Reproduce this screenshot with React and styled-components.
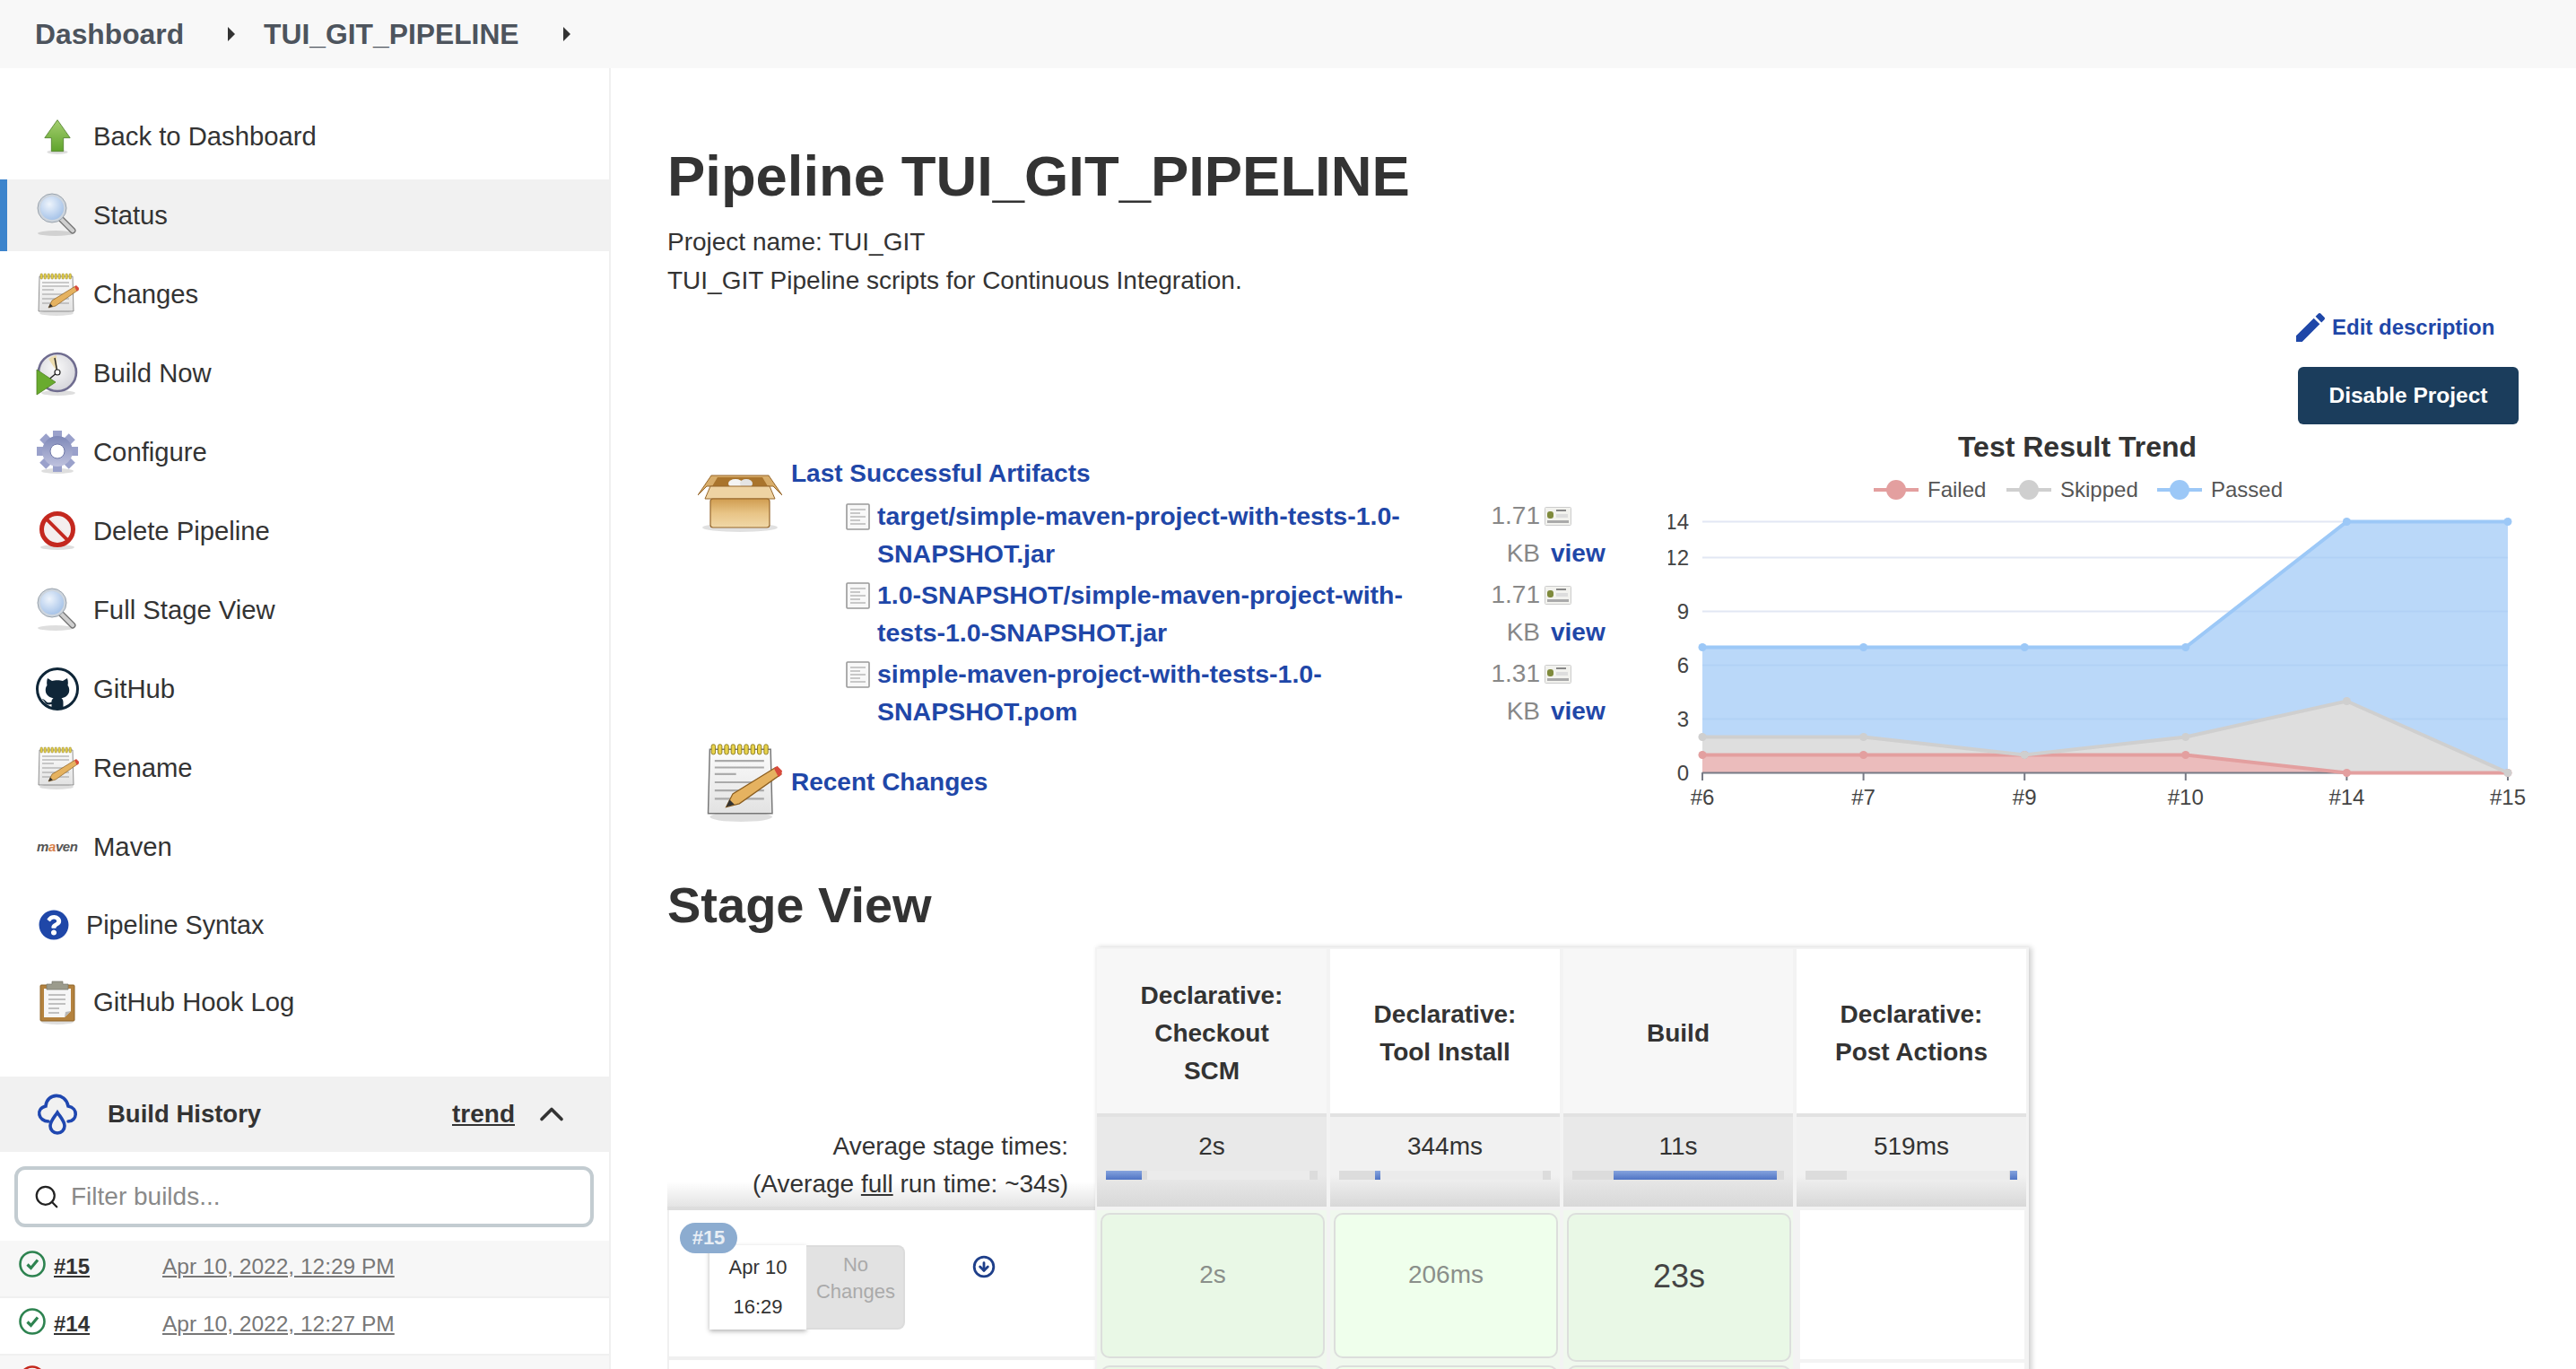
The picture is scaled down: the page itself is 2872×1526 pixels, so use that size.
import React from 'react';
import styled, { createGlobalStyle } from 'styled-components';
import { Search, ChevronUp, CircleArrowDown } from 'lucide-react';
import { FaQuestionCircle } from 'react-icons/fa';

const GlobalStyle = createGlobalStyle`
  html, body {
    margin: 0;
    height: 1526px;
    overflow: hidden;
    background: #fff;
  }
  * { box-sizing: border-box; }
  body {
    font-family: "Liberation Sans", Arial, sans-serif;
    font-size: 28px;
    color: #333;
  }
`;

const StyledPage = styled.div`
  height: 1526px;
  display: flex;
  flex-direction: column;
  overflow: hidden;
`;
const StyledHeader = styled.header`
  height: 76px;
  flex: none;
  background: #f8f8f8;
  padding-left: 39px;
  display: flex;
  align-items: center;
  font-size: 31.8px;
  font-weight: bold;
  color: #4d545d;
`;
const StyledCaret = styled.span`
  width: 0;
  height: 0;
  margin: 0 32px 0 49px;
  border-left: 8px solid #333;
  border-top: 8px solid transparent;
  border-bottom: 8px solid transparent;
`;
const StyledBody = styled.div`
  flex: 1;
  display: flex;
  min-height: 0;
`;

// sidebar
const StyledSidebar = styled.aside`
  width: 681px;
  flex: none;
  border-right: 2px solid #f0f0f0;
  padding-top: 36px;
`;
const StyledTask = styled.a`
  height: ${(p) => (p.$compact ? '78px' : '80px')};
  margin-bottom: 8px;
  display: flex;
  align-items: center;
  gap: ${(p) => (p.$narrow ? '19px' : '16px')};
  padding-left: ${(p) => (p.$narrow ? '43px' : '40px')};
  font-size: ${(p) => (p.$narrow ? '28.8px' : '29.25px')};
  color: #333;
  background: ${(p) => (p.$active ? '#f1f1f1' : 'transparent')};
  box-shadow: ${(p) => (p.$active ? 'inset 8px 0 0 #3c84cc' : 'none')};
`;
const StyledTaskIcon = styled.span`
  width: ${(p) => (p.$narrow ? '34px' : '48px')};
  height: 48px;
  flex: none;
  display: flex;
  align-items: center;
  justify-content: center;
`;
const StyledHistoryBar = styled.div`
  height: 84px;
  margin-top: 44px;
  background: #f1f1f1;
  padding-left: 40px;
  display: flex;
  align-items: center;
  gap: 32px;
`;
const StyledHistoryTitle = styled.span`
  font-size: 27.5px;
  font-weight: bold;
`;
const StyledTrend = styled.a`
  margin-left: auto;
  font-weight: bold;
  text-decoration: underline;
  color: #333;
`;
const StyledChevron = styled.span`
  width: 44px;
  margin: 0 42px 0 -13px;
  display: flex;
  color: #333;
`;
const StyledFilter = styled.div`
  height: 68px;
  margin: 16px 17px 15px 16px;
  border: 4px solid #c3ccd1;
  border-radius: 12px;
  display: flex;
  align-items: center;
  gap: 12px;
  padding-left: 17px;
  color: #222;
`;
const StyledFilterInput = styled.input`
  flex: 1;
  min-width: 0;
  border: none;
  outline: none;
  padding: 0;
  font-family: inherit;
  font-size: 28px;
  color: #333;
  &::placeholder {
    color: #8a8a8a;
    opacity: 1;
  }
`;
const StyledBuildRow = styled.div`
  height: 64px;
  padding: 11px 0 0 21px;
  display: flex;
  align-items: flex-start;
  background: ${(p) => (p.$odd ? '#f7f7f7' : '#fff')};
  border-bottom: 2px solid #f0f0f0;
`;
const StyledBuildNumber = styled.a`
  width: 121px;
  margin-left: 9px;
  line-height: 36px;
  font-size: 24px;
  font-weight: bold;
  text-decoration: underline;
  color: #333;
`;
const StyledBuildDate = styled.a`
  line-height: 36px;
  font-size: 24.5px;
  text-decoration: underline;
  color: #777;
`;

// main content
const StyledMain = styled.main`
  flex: 1;
  min-width: 0;
  padding-left: 63px;
`;
const StyledTitle = styled.h1`
  margin: 83px 0 0;
  font-size: 63.4px;
  line-height: 74px;
  font-weight: bold;
  color: #333;
`;
const StyledIntro = styled.div`
  margin-top: 15px;
  line-height: 43px;
  height: 96px;
`;
const StyledActions = styled.div`
  width: 248px;
  margin: 0 64px 0 auto;
  display: flex;
  flex-direction: column;
  align-items: flex-start;
`;
const StyledEdit = styled.a`
  height: 32px;
  margin-top: 5px;
  display: flex;
  align-items: center;
  gap: 8px;
  font-size: 24px;
  font-weight: bold;
  color: #1f47a8;
  white-space: nowrap;
`;
const StyledButton = styled.button`
  width: 246px;
  height: 64px;
  margin: 28px 0 0 2px;
  border: none;
  border-radius: 6px;
  background: #1b3d5c;
  color: #fff;
  font-family: inherit;
  font-size: 24.5px;
  font-weight: bold;
`;
const StyledSummary = styled.section`
  height: 443px;
  margin-top: 7px;
  display: flex;
  justify-content: space-between;
`;
const StyledArtifacts = styled.div`
  width: 1046px;
  padding: 27px 0 0 34px;
`;
const StyledArtifactTop = styled.div`
  display: flex;
  gap: 10px;
`;
const StyledBoxWrap = styled.span`
  width: 94px;
  height: 66px;
  margin-top: 21px;
  flex: none;
`;
const StyledBlueLink = styled.a`
  font-weight: bold;
  color: #1f47a8;
  line-height: 42px;
`;
const StyledArtifactList = styled.div`
  margin-top: -40px;
`;
const StyledArtifactRow = styled.div`
  display: flex;
  height: 84px;
  margin: 0 0 4px 165px;
  line-height: 42px;
`;
const StyledDocIcon = styled.span`
  width: 27px;
  height: 30px;
  margin: 7px 8px 0 0;
  flex: none;
`;
const StyledFileName = styled.div`
  width: 610px;
  flex: none;
  font-size: 28.5px;
`;
const StyledSize = styled.div`
  width: 129px;
  flex: none;
  text-align: right;
  color: #888;
`;
const StyledFingerprint = styled.div`
  margin-left: 5px;
  flex: none;
`;
const StyledPrintIcon = styled.div`
  height: 42px;
  padding-top: 11px;
  display: flex;
`;
const StyledView = styled.a`
  display: block;
  padding-left: 7px;
  font-weight: bold;
  color: #1f47a8;
`;
const StyledRecent = styled.div`
  margin: 14px 0 0 6px;
  display: flex;
  align-items: center;
  gap: 10px;
`;
const StyledChart = styled.svg`
  display: block;
  flex: none;
  margin-right: 42px;
  font-family: "Liberation Sans", Arial, sans-serif;
`;
const StyledStageTitle = styled.h2`
  margin: 54px 0 15px;
  font-size: 56px;
  line-height: 64px;
  font-weight: bold;
  color: #333;
`;

// stage view table
const StyledTable = styled.div`
  display: flex;
  align-items: flex-start;
`;
const StyledLabels = styled.div`
  width: 477px;
  flex: none;
  padding-top: 189px;
`;
const StyledAverageLabel = styled.div`
  height: 104px;
  padding: 12px 30px 0 0;
  text-align: right;
  line-height: 42px;
  border-bottom: 4px solid #ddd;
  background: linear-gradient(#fff 72%, #e4e4e4);
  u { text-decoration: underline; }
`;
const StyledRunRow = styled.div`
  height: 167px;
  padding: 13px 0 0 12px;
  border-left: 2px solid #f0f0f0;
  border-bottom: 4px solid #f0f0f0;
  position: relative;
  display: flex;
  align-items: flex-start;
`;
const StyledRunBadge = styled.span`
  position: absolute;
  left: 12px;
  top: 14px;
  z-index: 1;
  width: 64px;
  height: 34px;
  border-radius: 17px;
  background: #8cacd0;
  color: #e8eef5;
  font-size: 22px;
  font-weight: bold;
  line-height: 34px;
  text-align: center;
`;
const StyledDateCard = styled.div`
  width: 108px;
  height: 94px;
  margin: 26px 0 0 33px;
  padding-top: 3px;
  background: #fff;
  box-shadow: 0 2px 5px rgba(0, 0, 0, 0.3);
  font-size: 22px;
  line-height: 44px;
  text-align: center;
`;
const StyledChangesCard = styled.div`
  width: 110px;
  height: 94px;
  margin-top: 26px;
  padding: 5px 0 0 2px;
  background: #e2e2e2;
  border-radius: 0 8px 8px 0;
  border: 2px solid #dcdcdc;
  border-left: none;
  color: #aaa;
  font-size: 22px;
  line-height: 30px;
  text-align: center;
`;
const StyledDownload = styled.span`
  margin: 37px 0 0 75px;
  display: flex;
  color: #1e3f8a;
`;
const StyledStages = styled.div`
  width: 1041px;
  flex: none;
  padding: 2px 2px 0;
  display: grid;
  grid-template-columns: repeat(4, 256px);
  column-gap: 4px;
  background: #f3f3f3;
  box-shadow: 3px 0 6px rgba(0, 0, 0, 0.2);
`;
const StyledStageHead = styled.div`
  height: 187px;
  padding-top: 4px;
  display: flex;
  align-items: center;
  justify-content: center;
  text-align: center;
  font-weight: bold;
  line-height: 42px;
  background: ${(p) => (p.$odd ? '#f7f7f7' : '#fff')};
  border-bottom: 4px solid #e2e2e2;
`;
const StyledStageAverage = styled.div`
  height: 100px;
  margin-bottom: 4px;
  padding: 12px 10px 0;
  text-align: center;
  line-height: 42px;
  background: linear-gradient(${(p) => (p.$odd ? '#e9e9e9' : '#f1f1f1')} 65%, #d8d8d8);
`;
const StyledBar = styled.div`
  height: 10px;
  margin-top: 6px;
  background: linear-gradient(to right, #dcdcdc 19.5%, #ebebeb 19.5%, #ebebeb 96%, #dcdcdc 96%);
  position: relative;
`;
const StyledBarFill = styled.div`
  position: absolute;
  top: 0;
  bottom: 0;
  background: linear-gradient(#85a3dd, #4f74c4);
`;
const StyledRunCell = styled.div`
  height: 170px;
  padding: 3px 2px ${(p) => (p.$tall ? '1px' : '5px')} 4px;
  background: ${(p) => (p.$blank ? 'transparent' : '#f0f8ee')};
`;
const StyledBlank = styled.div`
  height: 166px;
  margin-top: -3px;
  background: #fff;
`;
const StyledStageBox = styled.div`
  height: 100%;
  border: 2px solid #dcdedc;
  border-radius: 10px;
  background: ${(p) => (p.$light ? '#efffec' : '#e9f8e6')};
  display: flex;
  align-items: center;
  justify-content: center;
  padding-bottom: 24px;
  font-size: ${(p) => (p.$big ? '36px' : '28px')};
  color: ${(p) => (p.$big ? '#444' : '#8a8f8a')};
`;

const Shadow = ({ cx = 22, cy = 44, rx = 18 }) => (
  <ellipse cx={cx} cy={cy} rx={rx} ry="3" fill="#000" opacity="0.13" />
);

function ArrowIcon() {
  return (
    <svg width="38" height="40" viewBox="0 0 44 48">
      <defs>
        <linearGradient id="arrowGreen" x1="0" y1="0" x2="0" y2="1">
          <stop offset="0" stopColor="#a5cf70" />
          <stop offset="1" stopColor="#5fa32c" />
        </linearGradient>
      </defs>
      <Shadow cy="45" rx="14" />
      <path d="M22 2 L39 26 H30 V44 H14 V26 H5 Z" fill="url(#arrowGreen)" stroke="#4f7f2a" strokeWidth="1" />
    </svg>
  );
}

function GlassIcon() {
  return (
    <svg width="48" height="52" viewBox="0 0 48 52">
      <defs>
        <radialGradient id="glassBlue" cx="0.4" cy="0.35" r="0.7">
          <stop offset="0" stopColor="#eef4fc" />
          <stop offset="1" stopColor="#9dbde6" />
        </radialGradient>
      </defs>
      <Shadow cx="22" cy="46" rx="20" />
      <line x1="28" y1="30" x2="41" y2="43" stroke="#707070" strokeWidth="7" strokeLinecap="round" />
      <line x1="28" y1="30" x2="41" y2="43" stroke="#cfcfcf" strokeWidth="4.5" strokeLinecap="round" />
      <circle cx="18" cy="18" r="14.5" fill="url(#glassBlue)" stroke="#cdd5de" strokeWidth="3" />
      <circle cx="18" cy="18" r="16" fill="none" stroke="#9aa3ac" strokeWidth="1" />
    </svg>
  );
}

function NotepadIcon({ size = 48 }) {
  return (
    <svg width={size} height={size} viewBox="0 0 48 48">
      <defs>
        <linearGradient id="padPaper" x1="0" y1="0" x2="0" y2="1">
          <stop offset="0" stopColor="#fcfcfc" />
          <stop offset="1" stopColor="#e2e2e2" />
        </linearGradient>
      </defs>
      <Shadow cx="23" cy="45" rx="19" />
      <path d="M4 4 H41 L42 43 H3 Z" fill="url(#padPaper)" stroke="#777" strokeWidth="0.8" />
      {[6, 10, 14, 18, 22, 26, 30, 34, 38].map((x) => (
        <rect key={x} x={x - 1} y="1" width="2.4" height="6" rx="1" fill="#e8d24a" stroke="#8a7a1e" strokeWidth="0.5" />
      ))}
      {[11, 15, 19, 24, 29, 34].map((y, i) => (
        <line key={y} x1="7" y1={y} x2={i === 2 ? 20 : 37} y2={y} stroke="#aaa" strokeWidth="1.2" />
      ))}
      <path d="M44 15 L47.5 19 L22 37 L14 39 L18 31 Z" fill="#e5b260" stroke="#8b5e20" strokeWidth="0.7" />
      <path d="M43 15.5 L45 14 L48 17 L47.5 19.5 L45.8 20.8 Z" fill="#d84a3c" />
      <path d="M14 39 L16 34.5 L19 37.5 Z" fill="#333" />
    </svg>
  );
}

function ClockIcon() {
  return (
    <svg width="48" height="54" viewBox="0 0 48 54">
      <defs>
        <radialGradient id="clockFace" cx="0.45" cy="0.4" r="0.65">
          <stop offset="0" stopColor="#fafafa" />
          <stop offset="1" stopColor="#d2d2d8" />
        </radialGradient>
      </defs>
      <Shadow cx="25" cy="49" rx="19" />
      <circle cx="24" cy="26" r="21" fill="url(#clockFace)" stroke="#6f6c8f" strokeWidth="2.6" />
      <path d="M24 26 L14 11 A20 20 0 0 1 23 7 Z" fill="#ecdcae" />
      <path d="M21 10 L24 26 L12 36" fill="none" stroke="#222" strokeWidth="1.4" />
      <circle cx="24" cy="26" r="3" fill="#fff" stroke="#222" strokeWidth="1.2" />
      <path d="M1 23 L22 37 L1 51 Z" fill="#69ab2f" stroke="#4c7f20" strokeWidth="0.8" />
    </svg>
  );
}

function GearIcon() {
  const teeth = [0, 45, 90, 135, 180, 225, 270, 315];
  return (
    <svg width="48" height="50" viewBox="0 0 48 50">
      <defs>
        <linearGradient id="gearFill" x1="0" y1="0" x2="0" y2="1">
          <stop offset="0" stopColor="#7e88b8" />
          <stop offset="1" stopColor="#bfc2de" />
        </linearGradient>
      </defs>
      <Shadow cx="24" cy="46" rx="18" />
      <g fill="url(#gearFill)">
        {teeth.map((a) => (
          <rect key={a} x="19" y="1" width="10" height="12" transform={`rotate(${a} 24 24)`} fill="#9aa1cb" />
        ))}
        <circle cx="24" cy="24" r="17" />
      </g>
      <circle cx="24" cy="24" r="8" fill="#fff" stroke="#6f78a8" strokeWidth="1" />
    </svg>
  );
}

function NoEntryIcon() {
  return (
    <svg width="44" height="46" viewBox="0 0 44 46">
      <Shadow cx="22" cy="41" rx="19" />
      <circle cx="22" cy="21" r="17.5" fill="#f4eeee" stroke="#c4281f" strokeWidth="5" />
      <line x1="10" y1="9" x2="34" y2="33" stroke="#c4281f" strokeWidth="5" />
      <line x1="13" y1="9" x2="34" y2="30" stroke="#f6f0f0" strokeWidth="1.5" />
    </svg>
  );
}

function OctocatIcon() {
  return (
    <svg width="48" height="48" viewBox="0 0 48 48">
      <defs>
        <clipPath id="octoClip">
          <circle cx="24" cy="24" r="22.5" />
        </clipPath>
      </defs>
      <g clipPath="url(#octoClip)">
        <path
          fill="#0f2638"
          d="M13 12 L18 15 C21 14 27 14 30 15 L35 12 C36 15 36 18 35.5 20 C38 23 38 29 34 32 C32 33.5 30 34 28.5 34.3 C30 35.5 30.5 37 30.5 39 V48 H17.5 V41 C14 42 11 41.5 9.5 38 C8.5 36.5 7.5 36 6.5 35 C8 35 10 36 11.5 38 C13 39.5 15 39.5 17.5 38.5 C17.5 36.5 18 35.5 19.5 34.3 C18 34 16 33.5 14 32 C10 29 10 23 12.5 20 C12 18 12 15 13 12 Z"
        />
      </g>
      <circle cx="24" cy="24" r="22.5" fill="none" stroke="#0f2638" strokeWidth="3" />
    </svg>
  );
}

function MavenIcon() {
  return (
    <svg width="48" height="16" viewBox="0 0 48 16">
      <text x="1" y="13" fontSize="15" fontWeight="bold" fontStyle="italic" fontFamily="Liberation Sans" fill="#555" textLength="46">
        m<tspan fill="#d9814a">a</tspan>ven
      </text>
    </svg>
  );
}

function ClipboardIcon() {
  return (
    <svg width="44" height="50" viewBox="0 0 44 50">
      <Shadow cx="22" cy="47" rx="18" />
      <rect x="3" y="6" width="38" height="40" rx="1" fill="#b4823e" stroke="#8c6226" strokeWidth="1" />
      <path d="M7 10 H37 V35 L30 42 H7 Z" fill="#f6f6f6" />
      <path d="M30 42 L31 36 L37 35 Z" fill="#b8b8b8" />
      {[17, 22, 27, 32, 37].map((y, i) => (
        <line key={y} x1="12" y1={y} x2={i > 2 ? 24 : 31} y2={y} stroke="#aaa" strokeWidth="1.4" />
      ))}
      <path d="M10 5 H16 V2 H28 V5 H34 V11 H10 Z" fill="#9b9b8c" stroke="#77776a" strokeWidth="0.7" />
    </svg>
  );
}

function CloudIcon() {
  return (
    <svg width="48" height="46" viewBox="0 0 48 46" fill="none" stroke="#1f47b0" strokeWidth="3.6" strokeLinecap="round">
      <path d="M14 31 C 3 31 -1 17 11 14 C 12 -1 33 -2 36 14 C 48 16 46 31 36 31" />
      <path d="M24 21 C 20 27 16 31 16 36 A 8 8 0 0 0 32 36 C 32 31 28 27 24 21 Z" />
    </svg>
  );
}

function StatusIcon({ failed }) {
  const color = failed ? '#c4281c' : '#2e8350';
  return (
    <svg width="30" height="30" viewBox="0 0 30 30" fill="none" stroke={color}>
      <circle cx="15" cy="15" r="13.5" strokeWidth="2.6" />
      {failed ? (
        <path d="M10 10 L20 20 M20 10 L10 20" strokeWidth="3" />
      ) : (
        <path d="M9.5 15.5 L13.5 19.5 L21 10.5" strokeWidth="3.2" />
      )}
    </svg>
  );
}

function BoxIcon() {
  return (
    <svg width="94" height="66" viewBox="0 0 94 66">
      <defs>
        <linearGradient id="boxBody" x1="0" y1="0" x2="0" y2="1">
          <stop offset="0" stopColor="#d09c50" />
          <stop offset="0.5" stopColor="#e8c486" />
          <stop offset="1" stopColor="#f0d8a8" />
        </linearGradient>
      </defs>
      <ellipse cx="47" cy="60" rx="42" ry="5" fill="#000" opacity="0.12" />
      <path d="M15 2 L79 2 L94 24 L84 14 L10 14 L0 24 Z" fill="#d8ad6a" stroke="#96662a" strokeWidth="1" />
      <path d="M16 14 L22 4 L72 4 L78 14 Z" fill="#a9742c" />
      <ellipse cx="42" cy="11" rx="8" ry="5" fill="#f4f4f4" />
      <ellipse cx="54" cy="11" rx="7" ry="5" fill="#e4e4e4" />
      <path d="M8 28 L14 14 H80 L86 28 Z" fill="#eed3a3" stroke="#96662a" strokeWidth="1" />
      <rect x="14" y="28" width="66" height="32" rx="3" fill="url(#boxBody)" stroke="#96662a" strokeWidth="1.2" />
    </svg>
  );
}

function DocIcon() {
  return (
    <svg width="27" height="30" viewBox="0 0 27 30">
      <rect x="1" y="1" width="25" height="28" rx="1" fill="#f8f8f8" stroke="#999" strokeWidth="1.6" />
      {[7, 11, 15, 19, 23].map((y, i) => (
        <line key={y} x1="5" y1={y} x2={i % 2 ? 16 : 22} y2={y} stroke="#c8c8c8" strokeWidth="2" />
      ))}
    </svg>
  );
}

function PrintIcon() {
  return (
    <svg width="30" height="21" viewBox="0 0 30 21">
      <rect x="0.5" y="0.5" width="29" height="20" rx="1" fill="#f2f2ee" stroke="#ccc" />
      <rect x="3" y="5" width="7" height="8" rx="3" fill="#7f8a3c" />
      <rect x="13" y="3" width="11" height="2" fill="#888" />
      <rect x="13" y="8" width="13" height="4" fill="#ddd" />
      <rect x="3" y="15" width="24" height="3" fill="#aaa" />
    </svg>
  );
}

function PencilIcon() {
  return (
    <svg width="32" height="32" viewBox="3 3 18 18" fill="#1f47a8">
      <path d="M3 17.25V21h3.75L17.81 9.94l-3.75-3.75L3 17.25zM20.71 7.04c.39-.39.39-1.02 0-1.41l-2.34-2.34c-.39-.39-1.02-.39-1.41 0l-1.83 1.83 3.75 3.75 1.83-1.83z" />
    </svg>
  );
}

const chartLabels = ['#6', '#7', '#9', '#10', '#14', '#15'];
const failedData = [1, 1, 1, 1, 0, 0];
const skippedData = [2, 2, 1, 2, 4, 0];
const passedData = [7, 7, 7, 7, 14, 14];
const xAt = (i) => 1898 + i * 179.6;
const yAt = (v) => 861.5 - v * 20;
const toLine = (data) => data.map((v, i) => `${xAt(i)},${yAt(v)}`).join(' ');
const toArea = (top, bottom) =>
  `${toLine(top)} ${bottom
    .map((v, i) => `${xAt(i)},${yAt(v)}`)
    .reverse()
    .join(' ')}`;

const legend = [
  { name: 'Failed', x: 2089, color: '#e39f9f' },
  { name: 'Skipped', x: 2237, color: '#cfcfcf' },
  { name: 'Passed', x: 2405, color: '#9cc8f7' },
];

function TrendChart() {
  const fills = [
    { data: passedData, below: skippedData, fill: 'rgba(156,200,247,0.7)' },
    { data: skippedData, below: failedData, fill: '#dedede' },
    { data: failedData, below: [0, 0, 0, 0, 0, 0], fill: '#ebbcbc' },
  ];
  const lines = [
    { data: passedData, line: '#9cc8f7' },
    { data: failedData, line: '#e39f9f' },
    { data: skippedData, line: '#cfcfcf' },
  ];
  return (
    <StyledChart width="970" height="430" viewBox="1860 480 970 430">
      <text x="2316" y="509" textAnchor="middle" fontSize="32" fontWeight="bold" fill="#333">
        Test Result Trend
      </text>
      {legend.map((item) => (
        <g key={item.name}>
          <line x1={item.x} x2={item.x + 50} y1="546" y2="546" stroke={item.color} strokeWidth="4" />
          <circle cx={item.x + 25} cy="546" r="11" fill={item.color} />
          <text x={item.x + 60} y="554" fontSize="24" fill="#555">
            {item.name}
          </text>
        </g>
      ))}
      {[3, 6, 9, 12, 14].map((v) => (
        <line key={v} x1="1898" x2="2796" y1={yAt(v)} y2={yAt(v)} stroke="#e2e7f4" strokeWidth="2" />
      ))}
      {[0, 3, 6, 9, 12, 14].map((v) => (
        <text key={v} x="1883" y={yAt(v) + 8} textAnchor="end" fontSize="24" fill="#444">
          {v}
        </text>
      ))}
      {fills.map((s) => (
        <polygon key={s.fill} points={toArea(s.data, s.below)} fill={s.fill} />
      ))}
      <line x1="1898" x2="2796" y1="861.5" y2="861.5" stroke="#777a85" strokeWidth="2" />
      {chartLabels.map((label, i) => (
        <g key={label}>
          <line x1={xAt(i)} x2={xAt(i)} y1="861" y2="870" stroke="#777a85" strokeWidth="2" />
          <text x={xAt(i)} y="897" textAnchor="middle" fontSize="24" fill="#444">
            {label}
          </text>
        </g>
      ))}
      {lines.map((s) => (
        <g key={s.line}>
          <polyline points={toLine(s.data)} fill="none" stroke={s.line} strokeWidth="4" />
          {s.data.map((v, i) => (
            <circle key={i} cx={xAt(i)} cy={yAt(v)} r="4.5" fill={s.line} />
          ))}
        </g>
      ))}
    </StyledChart>
  );
}

const tasks = [
  { name: 'Back to Dashboard', icon: <ArrowIcon /> },
  { name: 'Status', icon: <GlassIcon />, active: true },
  { name: 'Changes', icon: <NotepadIcon /> },
  { name: 'Build Now', icon: <ClockIcon /> },
  { name: 'Configure', icon: <GearIcon /> },
  { name: 'Delete Pipeline', icon: <NoEntryIcon /> },
  { name: 'Full Stage View', icon: <GlassIcon /> },
  { name: 'GitHub', icon: <OctocatIcon /> },
  { name: 'Rename', icon: <NotepadIcon /> },
  { name: 'Maven', icon: <MavenIcon /> },
  { name: 'Pipeline Syntax', icon: <FaQuestionCircle size={34} color="#1f47a8" />, narrow: true, compact: true },
  { name: 'GitHub Hook Log', icon: <ClipboardIcon />, compact: true },
];

const artifacts = [
  { file: 'target/simple-maven-project-with-tests-1.0-SNAPSHOT.jar', size: '1.71' },
  { file: '1.0-SNAPSHOT/simple-maven-project-with-tests-1.0-SNAPSHOT.jar', size: '1.71' },
  { file: 'simple-maven-project-with-tests-1.0-SNAPSHOT.pom', size: '1.31' },
];

const stages = [
  { name: ['Declarative:', 'Checkout', 'SCM'], time: '2s', left: 0, width: 17 },
  { name: ['Declarative:', 'Tool Install'], time: '344ms', left: 17, width: 2.5 },
  { name: ['Build'], time: '11s', left: 19.5, width: 77 },
  { name: ['Declarative:', 'Post Actions'], time: '519ms', left: 96.5, width: 3.5 },
];

export default function App() {
  return (
    <StyledPage>
      <GlobalStyle />
      <StyledHeader>
        Dashboard
        <StyledCaret />
        TUI_GIT_PIPELINE
        <StyledCaret />
      </StyledHeader>
      <StyledBody>
        <StyledSidebar>
          {tasks.map((task) => (
            <StyledTask key={task.name} $active={task.active} $narrow={task.narrow} $compact={task.compact}>
              <StyledTaskIcon $narrow={task.narrow}>{task.icon}</StyledTaskIcon>
              {task.name}
            </StyledTask>
          ))}
          <StyledHistoryBar>
            <CloudIcon />
            <StyledHistoryTitle>Build History</StyledHistoryTitle>
            <StyledTrend>trend</StyledTrend>
            <StyledChevron>
              <ChevronUp size={44} strokeWidth={2} />
            </StyledChevron>
          </StyledHistoryBar>
          <StyledFilter>
            <Search size={30} strokeWidth={1.8} />
            <StyledFilterInput placeholder="Filter builds..." />
          </StyledFilter>
          <StyledBuildRow $odd>
            <StatusIcon />
            <StyledBuildNumber>#15</StyledBuildNumber>
            <StyledBuildDate>Apr 10, 2022, 12:29 PM</StyledBuildDate>
          </StyledBuildRow>
          <StyledBuildRow>
            <StatusIcon />
            <StyledBuildNumber>#14</StyledBuildNumber>
            <StyledBuildDate>Apr 10, 2022, 12:27 PM</StyledBuildDate>
          </StyledBuildRow>
          <StyledBuildRow $odd>
            <StatusIcon failed />
          </StyledBuildRow>
        </StyledSidebar>

        <StyledMain>
          <StyledTitle>Pipeline TUI_GIT_PIPELINE</StyledTitle>
          <StyledIntro>
            Project name: TUI_GIT
            <br />
            TUI_GIT Pipeline scripts for Continuous Integration.
          </StyledIntro>
          <StyledActions>
            <StyledEdit>
              <PencilIcon />
              Edit description
            </StyledEdit>
            <StyledButton>Disable Project</StyledButton>
          </StyledActions>
          <StyledSummary>
            <StyledArtifacts>
              <StyledArtifactTop>
                <StyledBoxWrap>
                  <BoxIcon />
                </StyledBoxWrap>
                <StyledBlueLink>Last Successful Artifacts</StyledBlueLink>
              </StyledArtifactTop>
              <StyledArtifactList>
                {artifacts.map((item) => (
                  <StyledArtifactRow key={item.file}>
                    <StyledDocIcon>
                      <DocIcon />
                    </StyledDocIcon>
                    <StyledFileName>
                      <StyledBlueLink>{item.file}</StyledBlueLink>
                    </StyledFileName>
                    <StyledSize>
                      {item.size}
                      <br />
                      KB
                    </StyledSize>
                    <StyledFingerprint>
                      <StyledPrintIcon>
                        <PrintIcon />
                      </StyledPrintIcon>
                      <StyledView>view</StyledView>
                    </StyledFingerprint>
                  </StyledArtifactRow>
                ))}
              </StyledArtifactList>
              <StyledRecent>
                <NotepadIcon size={88} />
                <StyledBlueLink>Recent Changes</StyledBlueLink>
              </StyledRecent>
            </StyledArtifacts>
            <TrendChart />
          </StyledSummary>
          <StyledStageTitle>Stage View</StyledStageTitle>
          <StyledTable>
            <StyledLabels>
              <StyledAverageLabel>
                Average stage times:
                <br />
                (Average <u>full</u> run time: ~34s)
              </StyledAverageLabel>
              <StyledRunRow>
                <StyledRunBadge>#15</StyledRunBadge>
                <StyledDateCard>
                  Apr 10
                  <br />
                  16:29
                </StyledDateCard>
                <StyledChangesCard>
                  No
                  <br />
                  Changes
                </StyledChangesCard>
                <StyledDownload>
                  <CircleArrowDown size={26} strokeWidth={2.6} />
                </StyledDownload>
              </StyledRunRow>
              <StyledRunRow />
            </StyledLabels>
            <StyledStages>
              {stages.map((stage, i) => (
                <StyledStageHead key={stage.time} $odd={i % 2 === 0}>
                  <div>
                    {stage.name.map((line) => (
                      <div key={line}>{line}</div>
                    ))}
                  </div>
                </StyledStageHead>
              ))}
              {stages.map((stage, i) => (
                <StyledStageAverage key={stage.time} $odd={i % 2 === 0}>
                  {stage.time}
                  <StyledBar>
                    <StyledBarFill style={{ left: `${stage.left}%`, width: `${stage.width}%` }} />
                  </StyledBar>
                </StyledStageAverage>
              ))}
              <StyledRunCell>
                <StyledStageBox>2s</StyledStageBox>
              </StyledRunCell>
              <StyledRunCell>
                <StyledStageBox $light>206ms</StyledStageBox>
              </StyledRunCell>
              <StyledRunCell $tall>
                <StyledStageBox $big>23s</StyledStageBox>
              </StyledRunCell>
              <StyledRunCell $blank>
                <StyledBlank />
              </StyledRunCell>
              <StyledRunCell>
                <StyledStageBox />
              </StyledRunCell>
              <StyledRunCell>
                <StyledStageBox $light />
              </StyledRunCell>
              <StyledRunCell $tall>
                <StyledStageBox />
              </StyledRunCell>
              <StyledRunCell $blank>
                <StyledBlank />
              </StyledRunCell>
            </StyledStages>
          </StyledTable>
        </StyledMain>
      </StyledBody>
    </StyledPage>
  );
}
